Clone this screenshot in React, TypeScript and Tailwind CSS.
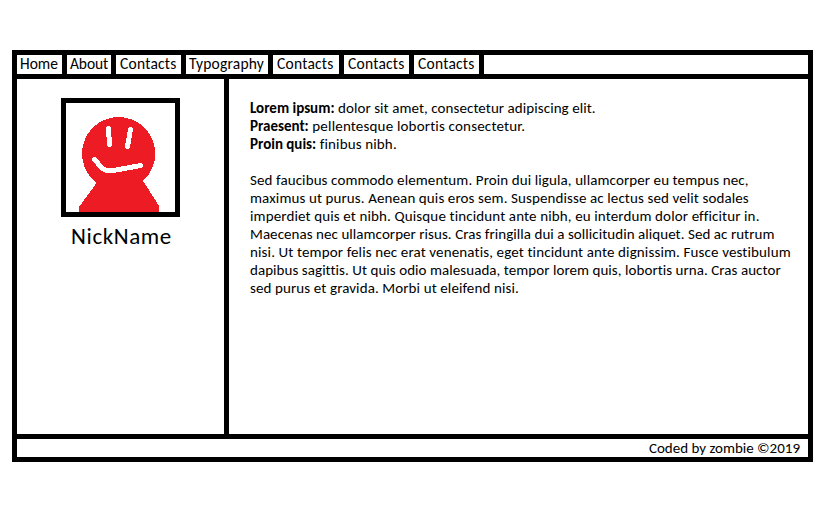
const tabs = [
  { label: "Home", box: "w-[50px] pl-[3px]" },
  { label: "About", box: "w-[49px] pl-[3px] tracking-[-0.1px]" },
  { label: "Contacts", box: "w-[70px] pl-[4px] tracking-[0.24px]" },
  { label: "Typography", box: "w-[87px] pl-[3px] tracking-[0.2px]" },
  { label: "Contacts", box: "w-[71px] pl-[4px] tracking-[0.24px]" },
  { label: "Contacts", box: "w-[70px] pl-[4px] tracking-[0.24px]" },
  { label: "Contacts", box: "w-[70px] pl-[4px] tracking-[0.24px]" },
];

const facts = [
  { term: "Lorem ipsum:", text: "dolor sit amet, consectetur adipiscing elit.", spacing: "tracking-[0.07px]" },
  { term: "Praesent:", text: "pellentesque lobortis consectetur.", spacing: "tracking-[0.18px]" },
  { term: "Proin quis:", text: "finibus nibh.", spacing: "tracking-[0.14px]" },
];

const lines = [
  { text: "Sed faucibus commodo elementum. Proin dui ligula, ullamcorper eu tempus nec,", spacing: "tracking-[0.1px]" },
  { text: "maximus ut purus. Aenean quis eros sem. Suspendisse ac lectus sed velit sodales", spacing: "tracking-[0.105px]" },
  { text: "imperdiet quis et nibh. Quisque tincidunt ante nibh, eu interdum dolor efficitur in.", spacing: "tracking-[0.13px]" },
  { text: "Maecenas nec ullamcorper risus. Cras fringilla dui a sollicitudin aliquet. Sed ac rutrum", spacing: "tracking-[0.055px]" },
  { text: "nisi. Ut tempor felis nec erat venenatis, eget tincidunt ante dignissim. Fusce vestibulum", spacing: "tracking-[0.13px]" },
  { text: "dapibus sagittis. Ut quis odio malesuada, tempor lorem quis, lobortis urna. Cras auctor", spacing: "tracking-[0.055px]" },
  { text: "sed purus et gravida. Morbi ut eleifend nisi.", spacing: "tracking-[0.11px]" },
];

function Avatar() {
  return (
    <svg className="block size-[109px]" viewBox="0 0 109 109" shapeRendering="crispEdges">
      <circle cx="52.6" cy="50.6" r="36.6" fill="#ed1c24" />
      <path d="M31.3 79 13 104v5h80v-6L76.5 77Z" fill="#ed1c24" />
      <g fill="none" stroke="#fff" strokeWidth="5" strokeLinecap="round" strokeLinejoin="round">
        <path d="M42.5 25.5 43.5 41.5" />
        <path d="M64.5 26.5 61.5 43.5" />
        <path d="M28.5 56.5 35.5 64.5Q38 67.5 43.5 67.5Q49 67.5 53 66.5L74.5 62.5" />
      </g>
    </svg>
  );
}

export default function App() {
  return (
    <div className="h-[530px] w-[830px] bg-white pt-[50px] pl-3 font-[Carlito,Lato,sans-serif] text-[15px] leading-[18px] text-black [font-variant-ligatures:none]">
      <div className="flex h-[412px] w-[801px] flex-col border-[5px] border-black">
        <nav className="flex h-6 shrink-0 border-b-[5px] border-black text-[15.5px] leading-[18px]">
          {tabs.map((tab, i) => (
            <a key={i} className={`${tab.box} shrink-0 border-r-[5px] border-black whitespace-nowrap`}>
              {tab.label}
            </a>
          ))}
        </nav>
        <div className="flex min-h-0 flex-1">
          <aside className="flex w-[212px] shrink-0 flex-col items-center border-r-[5px] border-black pt-[19px]">
            <div className="border-[5px] border-black">
              <Avatar />
            </div>
            <div className="mt-1 pl-[2px] text-[23px] leading-[30px] tracking-[0.6px]">NickName</div>
          </aside>
          <main className="flex-1 pt-5 pl-[21px] whitespace-nowrap">
            {facts.map((f) => (
              <p key={f.term} className={f.spacing}>
                <b className="tracking-normal">{f.term}</b> {f.text}
              </p>
            ))}
            <div className="mt-[18px]">
              {lines.map((line) => (
                <p key={line.text} className={line.spacing}>
                  {line.text}
                </p>
              ))}
            </div>
          </main>
        </div>
        <footer className="h-[23px] shrink-0 border-t-[5px] border-black pr-2 text-right">
          Coded by zombie ©2019
        </footer>
      </div>
    </div>
  );
}
